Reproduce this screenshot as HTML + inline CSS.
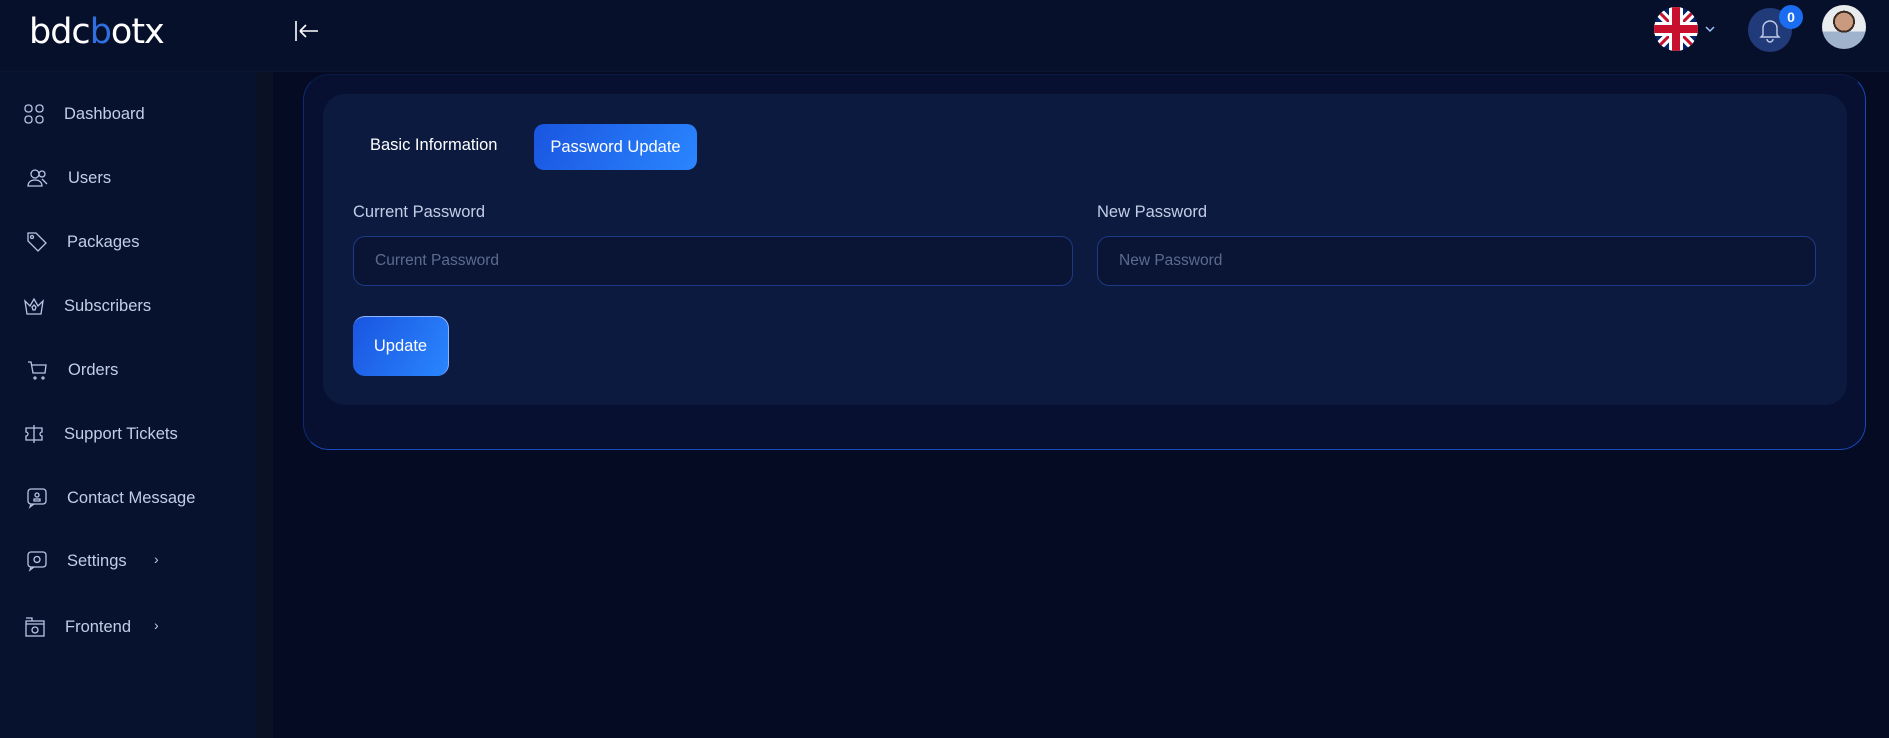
<!DOCTYPE html>
<html><head><meta charset="utf-8"><style>
*{box-sizing:border-box;margin:0;padding:0}
body{width:1889px;height:738px;overflow:hidden;background:#040b22;font-family:"Liberation Sans",sans-serif;position:relative}
.hdr{position:absolute;left:0;top:0;width:1889px;height:72px;background:#07102b;border-bottom:1px solid #0b1634}
.logo{position:absolute;left:29px;top:12px;font-size:35px;color:#fff;letter-spacing:-1px;font-family:"DejaVu Sans","Liberation Sans",sans-serif}
.logo b{color:#2f6fe0;font-weight:normal}
.side{position:absolute;left:0;top:72px;width:256px;height:666px;background:#07122e}
.sb{position:absolute;left:256px;top:72px;width:17px;height:666px;background:#0a1125}
.item{position:absolute;left:22px;height:24px;display:flex;align-items:center;color:#c3cde6;font-size:16.5px}
.item svg{width:24px;height:24px;margin-right:18px;stroke:#b9c5e3;fill:none;stroke-width:1.3}
.chev{position:absolute;left:154px;color:#c3cde6;font-size:14px}
.outer{position:absolute;left:303px;top:74px;width:1563px;height:376px;background:#071030;border-radius:26px;border:1px solid #1747b8;border-top-color:#0b1a45;border-left-color:#0f2a70}
.inner{position:absolute;left:323px;top:94px;width:1524px;height:311px;background:#0c1a40;border-radius:22px}
.tab1{position:absolute;left:370px;top:136px;color:#fff;font-size:16.5px}
.btn{position:absolute;background:linear-gradient(120deg,#1a55e0,#2a86ff);color:#fff;border-radius:10px;display:flex;align-items:center;justify-content:center;font-size:16.5px}
.lbl{position:absolute;top:203px;color:#c3cde6;font-size:16.5px}
.inp{position:absolute;top:236px;height:50px;border:1px solid #1d3a82;border-radius:12px;background:#0a1535;color:#5d6a90;font-size:15.5px;padding-left:21px;display:flex;align-items:center}
</style></head><body>
<div class="hdr">
<div class="logo">bdc<b>b</b>otx</div>
<svg style="position:absolute;left:294px;top:19px" width="26" height="24" viewBox="0 0 26 24"><path d="M2 2V22M6 12H24M6 12L12 6M6 12L12 18" stroke="#fff" stroke-width="1.6" fill="none"/></svg>
<svg style="position:absolute;left:1654px;top:7px" width="44" height="44" viewBox="0 0 44 44"><defs><clipPath id="c"><circle cx="22" cy="22" r="22"/></clipPath></defs><g clip-path="url(#c)"><rect width="44" height="44" fill="#012169"/><path d="M0 0L44 44M44 0L0 44" stroke="#fff" stroke-width="9"/><path d="M0 0L44 44M44 0L0 44" stroke="#c8102e" stroke-width="3"/><path d="M22 0V44M0 22H44" stroke="#fff" stroke-width="14"/><path d="M22 0V44M0 22H44" stroke="#c8102e" stroke-width="8"/></g></svg>
<svg style="position:absolute;left:1705px;top:26px" width="10" height="7"><path d="M1 1L5 5L9 1" stroke="#9fc2ff" stroke-width="1.5" fill="none"/></svg>
<div style="position:absolute;left:1748px;top:8px;width:44px;height:44px;border-radius:50%;background:#213a7a"></div>
<svg style="position:absolute;left:1759px;top:17px" width="22" height="26" viewBox="0 0 22 26"><path d="M4 18V11a7 7 0 0 1 14 0v7l2 2H2zM8 22a3 3 0 0 0 6 0" stroke="#c3cde6" stroke-width="1.4" fill="none"/></svg>
<div style="position:absolute;left:1779px;top:5px;width:24px;height:24px;border-radius:50%;background:#1a6df0;color:#fff;font-size:14px;font-weight:bold;display:flex;align-items:center;justify-content:center">0</div>
<div style="position:absolute;left:1822px;top:5px;width:44px;height:44px;border-radius:50%;background:radial-gradient(circle at 50% 38%,#c99a80 0 9px,#3a2a22 9px 11px,transparent 11px),linear-gradient(#e8ecef 0 60%,#9fb3cc 60%)"></div>
</div>
<div class="side">
<svg style="position:absolute;left:259px;top:4px" width="10" height="8"><path d="M1 6L5 2L9 6" stroke="#666" stroke-width="1.5" fill="none"/></svg>
</div>
<div class="sb"></div>
<div class="item" style="top:102px"><svg viewBox="0 0 24 24"><rect x="3" y="3" width="7" height="7" rx="3"/><rect x="14" y="3" width="7" height="7" rx="3"/><rect x="3" y="14" width="7" height="7" rx="3"/><rect x="14" y="14" width="7" height="7" rx="3"/></svg>Dashboard</div>
<div class="item" style="top:166px;left:26px"><svg viewBox="0 0 24 24"><circle cx="9" cy="8" r="4"/><circle cx="16" cy="8" r="3"/><path d="M2 20c0-4 3-6 7-6s7 2 7 6zM16 13l5 5"/></svg>Users</div>
<div class="item" style="top:230px;left:25px"><svg viewBox="0 0 24 24"><path d="M3 3h8l10 10-8 8L3 11z"/><circle cx="7" cy="7" r="1.5"/></svg>Packages</div>
<div class="item" style="top:294px"><svg viewBox="0 0 24 24"><path d="M3 7l5 5 4-7 4 7 5-5-2 13H5z"/><path d="M12 11l2 2-1 3h-2l-1-3z"/></svg>Subscribers</div>
<div class="item" style="top:358px;left:26px"><svg viewBox="0 0 24 24"><path d="M2 4h3l2 11h12l1-8H6"/><circle cx="9" cy="20" r="1"/><circle cx="17" cy="20" r="1"/></svg>Orders</div>
<div class="item" style="top:422px"><svg viewBox="0 0 24 24"><path d="M4 6h16v4a2 2 0 0 0 0 4v4H4v-4a2 2 0 0 0 0-4zM12 3v18"/></svg>Support Tickets</div>
<div class="item" style="top:486px;left:25px"><svg viewBox="0 0 24 24"><rect x="3" y="3" width="18" height="15" rx="3"/><circle cx="12" cy="9" r="2"/><path d="M9 15h6v-2H9zM6 18l-1 3 4-3"/></svg>Contact Message</div>
<div class="item" style="top:549px;left:25px"><svg viewBox="0 0 24 24"><rect x="3" y="3" width="18" height="15" rx="3"/><circle cx="12" cy="10.5" r="3"/><path d="M6 18l-1 3 4-3"/></svg>Settings</div>
<div class="chev" style="top:551px">›</div>
<div class="item" style="top:615px;left:23px"><svg viewBox="0 0 24 24"><rect x="3" y="6" width="18" height="15"/><path d="M3 3h6v3M3 9h18"/><circle cx="12" cy="15" r="3"/></svg>Frontend</div>
<div class="chev" style="top:617px">›</div>
<div class="outer"></div>
<div class="inner"></div>
<div class="tab1">Basic Information</div>
<div class="btn" style="left:534px;top:124px;width:163px;height:46px">Password Update</div>
<div class="lbl" style="left:353px">Current Password</div>
<div class="lbl" style="left:1097px">New Password</div>
<div class="inp" style="left:353px;width:720px">Current Password</div>
<div class="inp" style="left:1097px;width:719px">New Password</div>
<div class="btn" style="left:353px;top:316px;width:96px;height:60px;border-radius:12px;border-top:1px solid #8fb4ff;border-right:1px solid #8fb4ff">Update</div>
</body></html>
